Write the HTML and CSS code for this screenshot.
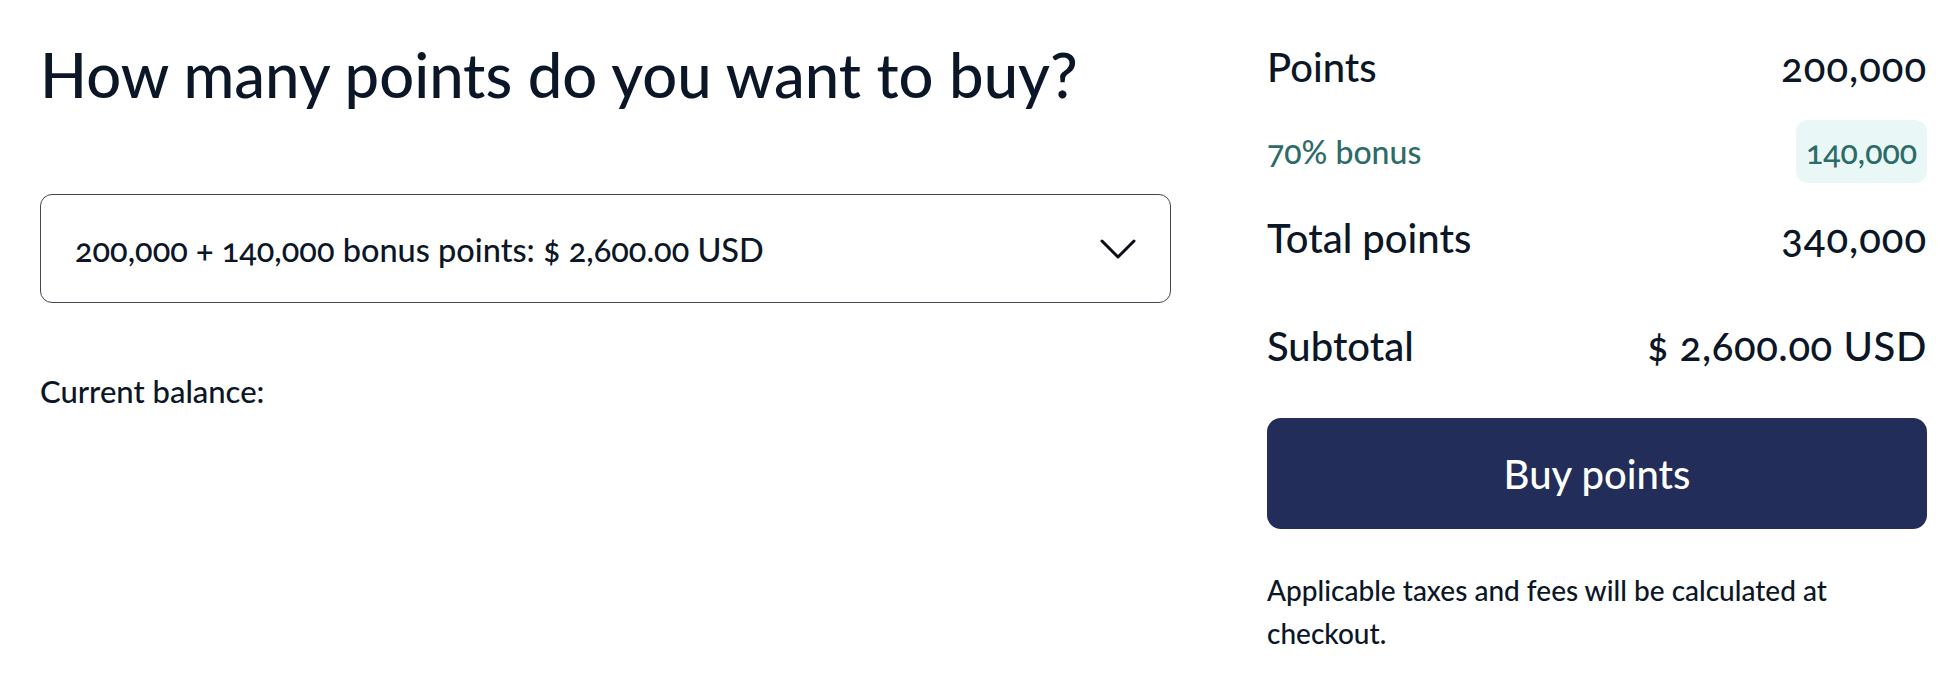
FILE: index.html
```html
<!DOCTYPE html>
<html lang="en">
<head>
<meta charset="utf-8">
<title>Buy points</title>
<link rel="stylesheet" href="styles.css">
</head>
<body>
<main class="page">
  <section class="chooser">
    <h1 class="title">How many points do you want to buy?</h1>
    <div class="select" role="combobox" aria-expanded="false">
      <span class="select-text">200,000 + 140,000 bonus points: $ 2,600.00 USD</span>
      <svg class="chevron" width="36" height="20" viewBox="0 0 36 20" aria-hidden="true">
        <path d="M2 2 L18 18 L34 2" fill="none" stroke="#0b0f14" stroke-width="3" stroke-linecap="round" stroke-linejoin="round"/>
      </svg>
    </div>
    <p class="balance">Current balance:</p>
  </section>
  <aside class="summary">
    <div class="row row-main">
      <span>Points</span>
      <span class="num">200,000</span>
    </div>
    <div class="row row-bonus">
      <span>70% bonus</span>
      <span class="pill">140,000</span>
    </div>
    <div class="row row-main">
      <span>Total points</span>
      <span class="num">340,000</span>
    </div>
    <div class="row row-sub">
      <span>Subtotal</span>
      <span class="num">$ 2,600.00 USD</span>
    </div>
    <button class="buy" type="button">Buy points</button>
    <p class="note">Applicable taxes and fees will be calculated at checkout.</p>
  </aside>
</main>
</body>
</html>
```
FILE: styles.css
```css
html, body {
  margin: 0;
  padding: 0;
  background: #ffffff;
}

body {
  font-family: "Lato", "Noto Sans", sans-serif;
  font-weight: 500;
  font-variant-numeric: oldstyle-nums;
  color: #0b1627;
}

.page {
  display: grid;
  grid-template-columns: 1131px 660px;
  column-gap: 96px;
  padding: 0 27px 0 40px;
}

.chooser {
  padding-top: 38px;
}

.title {
  margin: 0;
  font-size: 61.5px;
  line-height: 72px;
  font-weight: 500;
  white-space: nowrap;
}

.select {
  margin-top: 84px;
  height: 109px;
  box-sizing: border-box;
  border: 1px solid #3f4750;
  border-radius: 12px;
  padding: 0 34px 0 34px;
  display: flex;
  align-items: center;
  justify-content: space-between;
}

.select-text {
  font-size: 32.5px;
  line-height: 38px;
  padding-top: 2px;
}

.chevron {
  display: block;
  flex: none;
}

.balance {
  margin: 70px 0 0;
  font-size: 31px;
  line-height: 36px;
}

.summary {
  padding-top: 45px;
  display: flex;
  flex-direction: column;
}

.row {
  display: flex;
  justify-content: space-between;
  align-items: center;
}

.row-main {
  font-size: 40px;
  line-height: 44px;
}

.num {
  letter-spacing: 1px;
}

.row-bonus {
  margin: 31px 0 33px;
  font-size: 32px;
  color: #2d6b68;
}

.pill {
  display: block;
  height: 63px;
  line-height: 63px;
  padding: 0 10px;
  border-radius: 12px;
  background: #e9f7f7;
}

.row-sub {
  margin-top: 63px;
  font-size: 40px;
  line-height: 46px;
}

.row-sub .num {
  letter-spacing: 0.6px;
}

.buy {
  margin-top: 49px;
  height: 111px;
  border: 0;
  border-radius: 14px;
  background: #222e59;
  color: #ffffff;
  font-family: inherit;
  font-weight: 500;
  font-size: 40px;
  cursor: pointer;
}

.note {
  margin: 40px 0 0;
  font-size: 28px;
  line-height: 42.5px;
}
```
